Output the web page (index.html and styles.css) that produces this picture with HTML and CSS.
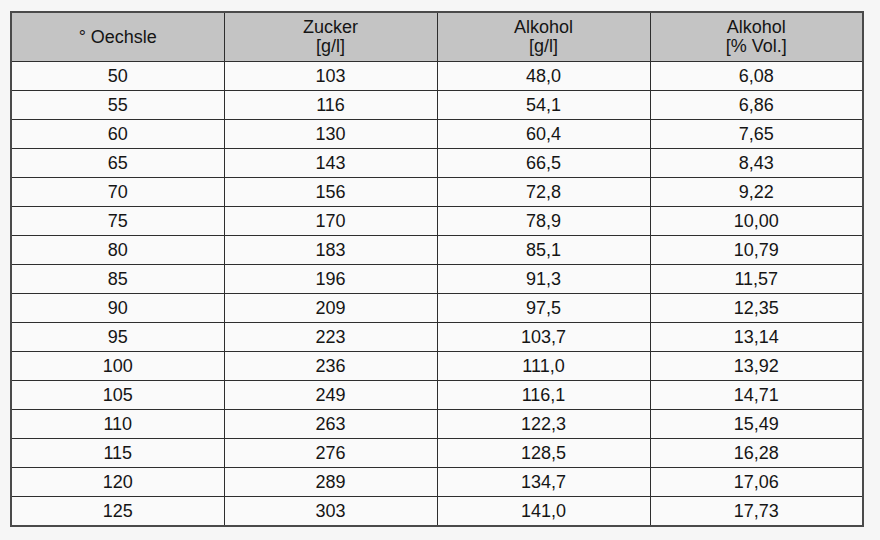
FILE: index.html
```html
<!DOCTYPE html>
<html>
<head>
<meta charset="utf-8">
<link rel="stylesheet" href="styles.css">
</head>
<body>
<div class="page">
<table class="tbl">
<thead>
<tr><th>° Oechsle</th><th>Zucker<br>[g/l]</th><th>Alkohol<br>[g/l]</th><th>Alkohol<br>[% Vol.]</th></tr>
</thead>
<tbody>
<tr><td>50</td><td>103</td><td>48,0</td><td>6,08</td></tr>
<tr><td>55</td><td>116</td><td>54,1</td><td>6,86</td></tr>
<tr><td>60</td><td>130</td><td>60,4</td><td>7,65</td></tr>
<tr><td>65</td><td>143</td><td>66,5</td><td>8,43</td></tr>
<tr><td>70</td><td>156</td><td>72,8</td><td>9,22</td></tr>
<tr><td>75</td><td>170</td><td>78,9</td><td>10,00</td></tr>
<tr><td>80</td><td>183</td><td>85,1</td><td>10,79</td></tr>
<tr><td>85</td><td>196</td><td>91,3</td><td>11,57</td></tr>
<tr><td>90</td><td>209</td><td>97,5</td><td>12,35</td></tr>
<tr><td>95</td><td>223</td><td>103,7</td><td>13,14</td></tr>
<tr><td>100</td><td>236</td><td>111,0</td><td>13,92</td></tr>
<tr><td>105</td><td>249</td><td>116,1</td><td>14,71</td></tr>
<tr><td>110</td><td>263</td><td>122,3</td><td>15,49</td></tr>
<tr><td>115</td><td>276</td><td>128,5</td><td>16,28</td></tr>
<tr><td>120</td><td>289</td><td>134,7</td><td>17,06</td></tr>
<tr><td>125</td><td>303</td><td>141,0</td><td>17,73</td></tr>
</tbody>
</table>
</div>
</body>
</html>
```
FILE: styles.css
```css
html, body {
  margin: 0;
  background: #f6f6f6;
}
.page {
  padding: 11px 0 0 10px;
  font-family: "Liberation Sans", Arial, sans-serif;
  color: #151515;
}
.tbl {
  border-collapse: collapse;
  width: 854px;
  table-layout: fixed;
  background: #fafafa;
  border: 2px solid #4a4a4a;
}
.tbl th, .tbl td {
  border: 1px solid #2e2e2e;
  text-align: center;
  padding: 0;
  font-size: 18px;
  font-weight: normal;
}
.tbl th {
  background: #c4c4c4;
  height: 48px;
  line-height: 19px;
}
.tbl td {
  height: 28px;
  line-height: 20px;
}
```
